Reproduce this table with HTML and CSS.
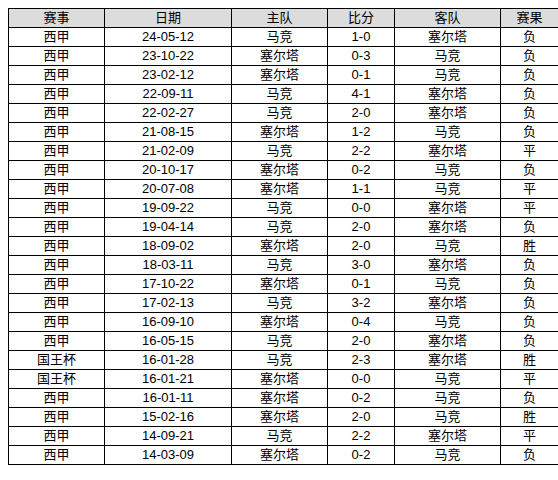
FILE: index.html
```html
<!DOCTYPE html>
<html>
<head>
<meta charset="utf-8">
<link rel="stylesheet" href="styles.css">
</head>
<body>
<table class="matches">
<colgroup>
<col class="c-comp"><col class="c-date"><col class="c-home"><col class="c-score"><col class="c-away"><col class="c-res">
</colgroup>
<thead>
<tr><th>赛事</th><th>日期</th><th>主队</th><th>比分</th><th>客队</th><th>赛果</th></tr>
</thead>
<tbody>
<tr><td>西甲</td><td>24-05-12</td><td>马竞</td><td>1-0</td><td>塞尔塔</td><td>负</td></tr>
<tr><td>西甲</td><td>23-10-22</td><td>塞尔塔</td><td>0-3</td><td>马竞</td><td>负</td></tr>
<tr><td>西甲</td><td>23-02-12</td><td>塞尔塔</td><td>0-1</td><td>马竞</td><td>负</td></tr>
<tr><td>西甲</td><td>22-09-11</td><td>马竞</td><td>4-1</td><td>塞尔塔</td><td>负</td></tr>
<tr><td>西甲</td><td>22-02-27</td><td>马竞</td><td>2-0</td><td>塞尔塔</td><td>负</td></tr>
<tr><td>西甲</td><td>21-08-15</td><td>塞尔塔</td><td>1-2</td><td>马竞</td><td>负</td></tr>
<tr><td>西甲</td><td>21-02-09</td><td>马竞</td><td>2-2</td><td>塞尔塔</td><td>平</td></tr>
<tr><td>西甲</td><td>20-10-17</td><td>塞尔塔</td><td>0-2</td><td>马竞</td><td>负</td></tr>
<tr><td>西甲</td><td>20-07-08</td><td>塞尔塔</td><td>1-1</td><td>马竞</td><td>平</td></tr>
<tr><td>西甲</td><td>19-09-22</td><td>马竞</td><td>0-0</td><td>塞尔塔</td><td>平</td></tr>
<tr><td>西甲</td><td>19-04-14</td><td>马竞</td><td>2-0</td><td>塞尔塔</td><td>负</td></tr>
<tr><td>西甲</td><td>18-09-02</td><td>塞尔塔</td><td>2-0</td><td>马竞</td><td>胜</td></tr>
<tr><td>西甲</td><td>18-03-11</td><td>马竞</td><td>3-0</td><td>塞尔塔</td><td>负</td></tr>
<tr><td>西甲</td><td>17-10-22</td><td>塞尔塔</td><td>0-1</td><td>马竞</td><td>负</td></tr>
<tr><td>西甲</td><td>17-02-13</td><td>马竞</td><td>3-2</td><td>塞尔塔</td><td>负</td></tr>
<tr><td>西甲</td><td>16-09-10</td><td>塞尔塔</td><td>0-4</td><td>马竞</td><td>负</td></tr>
<tr><td>西甲</td><td>16-05-15</td><td>马竞</td><td>2-0</td><td>塞尔塔</td><td>负</td></tr>
<tr><td>国王杯</td><td>16-01-28</td><td>马竞</td><td>2-3</td><td>塞尔塔</td><td>胜</td></tr>
<tr><td>国王杯</td><td>16-01-21</td><td>塞尔塔</td><td>0-0</td><td>马竞</td><td>平</td></tr>
<tr><td>西甲</td><td>16-01-11</td><td>塞尔塔</td><td>0-2</td><td>马竞</td><td>负</td></tr>
<tr><td>西甲</td><td>15-02-16</td><td>塞尔塔</td><td>2-0</td><td>马竞</td><td>胜</td></tr>
<tr><td>西甲</td><td>14-09-21</td><td>马竞</td><td>2-2</td><td>塞尔塔</td><td>平</td></tr>
<tr><td>西甲</td><td>14-03-09</td><td>塞尔塔</td><td>0-2</td><td>马竞</td><td>负</td></tr>
</tbody>
</table>
</body>
</html>
```
FILE: styles.css
```css
html, body {
  margin: 0;
  padding: 0;
  background: #ffffff;
}
body {
  padding: 8px;
  font-family: "Liberation Sans", "Noto Sans CJK SC", sans-serif;
  font-size: 13px;
  color: #000000;
}
.matches {
  border-collapse: collapse;
  table-layout: fixed;
  width: 550px;
}
.matches th,
.matches td {
  border: 1px solid #000000;
  padding: 0;
  height: 18px;
  line-height: 18px;
  text-align: center;
  font-weight: normal;
  white-space: nowrap;
  overflow: hidden;
}
.matches th {
  background: #dcdcdc;
}
.c-comp { width: 96px; }
.c-date { width: 127px; }
.c-home { width: 96px; }
.c-score { width: 67px; }
.c-away { width: 106px; }
.c-res { width: 58px; }
```
